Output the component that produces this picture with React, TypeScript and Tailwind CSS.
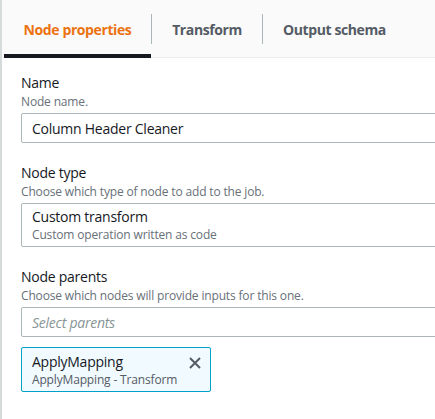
import React from "react";

const font = { fontFamily: '"Open Sans", "Noto Sans", sans-serif' };

function Field({ label, helper, children }: { label: string; helper: string; children: React.ReactNode }) {
  return (
    <div className="flex flex-col">
      <div className="text-[14px] leading-[22px] tracking-[-0.25px] text-[#16191f]">{label}</div>
      <div className="text-[12px] leading-[16px] tracking-[-0.16px] text-[#687078]">{helper}</div>
      <div className="mt-[3px]">{children}</div>
    </div>
  );
}

export default function App() {
  return (
    <div style={font} className="w-[435px] h-[419px] bg-white border-l-2 border-[#d5dbdb] overflow-hidden">
      <div className="h-[58px] bg-[#fafafa] border-b border-[#eaeded] flex items-stretch tracking-[-0.4px]">
        <div className="relative w-[149px] flex items-center justify-center pl-[2px] pt-[2px] text-[14px] font-bold text-[#ec7211]">
          Node properties
          <div className="absolute left-[2px] right-0 bottom-[-1px] h-[4px] bg-[#16191f]" />
        </div>
        <div className="w-px self-center h-[30px] bg-[#aab7b8]" />
        <div className="w-[110px] flex items-center justify-center pt-[2px] text-[14px] font-bold text-[#545b64]">
          Transform
        </div>
        <div className="w-px self-center h-[30px] bg-[#aab7b8]" />
        <div className="pl-[20px] flex items-center pt-[2px] text-[14px] font-bold text-[#545b64]">Output schema</div>
      </div>

      <div className="pl-[19px] pt-[14px] flex flex-col gap-[19px]">
        <Field label="Name" helper="Node name.">
          <div className="h-[30px] w-[440px] border border-[#aab7b8] rounded-[2px] flex items-center px-[10px] text-[14px] tracking-[-0.25px] text-[#16191f]">
            Column Header Cleaner
          </div>
        </Field>
        <Field label="Node type" helper="Choose which type of node to add to the job.">
          <div className="h-[44px] w-[440px] border border-[#aab7b8] rounded-[2px] flex flex-col justify-center px-[10px]">
            <div className="text-[14px] leading-[20px] tracking-[-0.25px] text-[#16191f]">Custom transform</div>
            <div className="text-[12px] leading-[16px] tracking-[-0.16px] text-[#687078]">Custom operation written as code</div>
          </div>
        </Field>
        <Field label="Node parents" helper="Choose which nodes will provide inputs for this one.">
          <div className="h-[30px] w-[440px] border border-[#aab7b8] rounded-[2px] flex items-center px-[10px] text-[14px] tracking-[-0.25px] italic text-[#879596]">
            Select parents
          </div>
          <div className="mt-[10px] w-[190px] h-[45px] bg-[#f1faff] border border-[#00a1c9] rounded-[2px] flex items-start justify-between pl-[10px] pr-[8px] pt-[4px]">
            <div className="flex flex-col">
              <div className="text-[14px] leading-[20px] tracking-[-0.25px] text-[#16191f]">ApplyMapping</div>
              <div className="text-[12px] leading-[16px] tracking-[-0.16px] text-[#545b64]">ApplyMapping - Transform</div>
            </div>
            <svg width="14" height="14" viewBox="0 0 14 14" className="mt-[4px]">
              <path d="M2 2 L12 12 M12 2 L2 12" stroke="#545b64" strokeWidth="2" fill="none" />
            </svg>
          </div>
        </Field>
      </div>
    </div>
  );
}
